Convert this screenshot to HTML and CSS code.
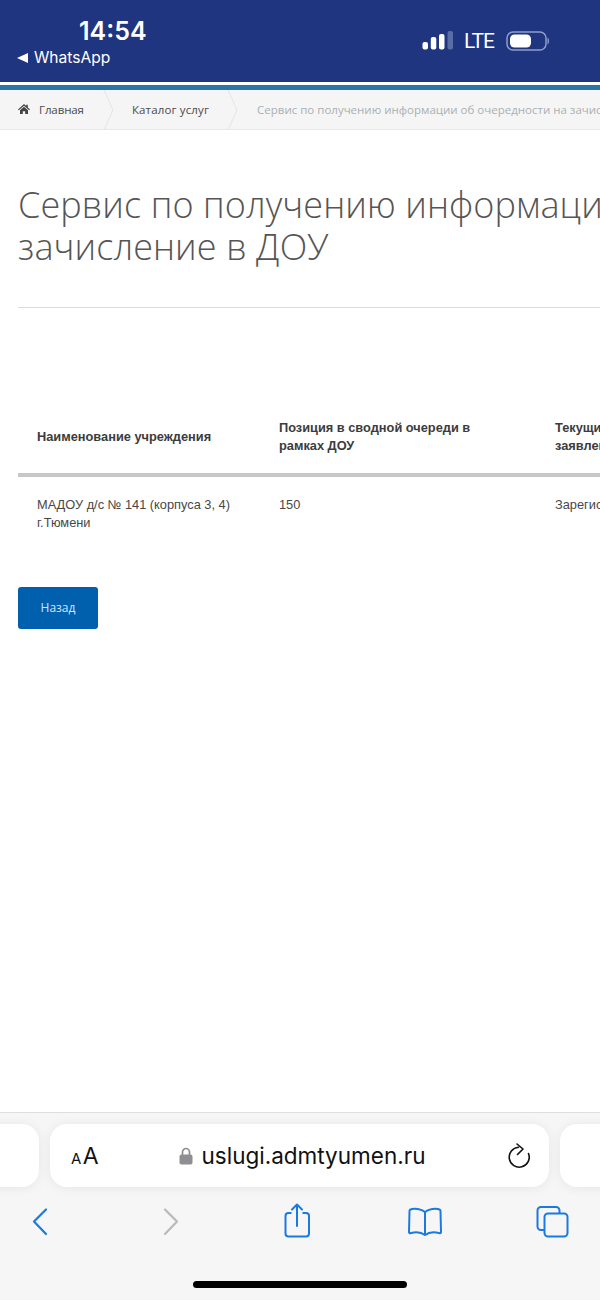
FILE: index.html
```html
<!DOCTYPE html>
<html lang="ru">
<head>
    <meta charset="UTF-8">
    <meta name="viewport" content="width=device-width, initial-scale=1.0">
    <title>Сервис по получению информации об очередности</title>
    <link rel="stylesheet" href="styles.css">
</head>
<body>
    <div class="phone">
        <header class="status-bar">
            <div class="status-left">
                <div class="status-time">14:54</div>
                <div class="status-back">
                    <svg class="back-arrow" width="11" height="10" viewBox="0 0 11 10"><path d="M0 5 L11 0 V10 Z" fill="#fff"/></svg>
                    <span>WhatsApp</span>
                </div>
            </div>
            <div class="status-right">
                <svg class="status-signal" width="31" height="20" viewBox="0 0 31 20">
                    <rect x="0.5" y="11" width="5.5" height="7.500" rx="2" fill="#fff"/>
                    <rect x="8.800" y="6" width="5.500" height="12.500" rx="2" fill="#fff"/>
                    <rect x="17" y="3" width="5.500" height="15.500" rx="2" fill="#fff"/>
                    <rect x="25.500" y="0" width="5.500" height="18.500" rx="2" fill="#5a6ea6"/>
                </svg>
                <span class="status-lte">LTE</span>
                <svg width="44" height="20" viewBox="0 0 44 20">
                    <rect x="1" y="1" width="39" height="18" rx="6" fill="none" stroke="#8f9ec8" stroke-width="1.5"/>
                    <rect x="4" y="3.5" width="21" height="13" rx="4.5" fill="#fff"/>
                    <path d="M41.5 6.5 C43.5 7.5 43.5 12.5 41.5 13.5 Z" fill="#8f9ec8"/>
                </svg>
            </div>
        </header>
        <div class="site-stripe"></div>

        <nav class="breadcrumbs">
            <svg class="crumb-home" width="12" height="10" viewBox="0 0 12 10"><path d="M6 0 L8.2 2 V0.8 H9.8 V3.5 L12 5.5 L11.2 6.3 L6 1.8 L0.8 6.3 L0 5.5 Z M2 6.2 L6 2.8 L10 6.2 V10 H7.2 V7.2 H4.8 V10 H2 Z" fill="#444"/></svg>
            <span class="crumb crumb-first">Главная</span>
            <svg class="crumb-sep" width="14" height="40" viewBox="0 0 14 40"><path d="M1 0 L10 20 L1 40" fill="none" stroke="#e4e4e4" stroke-width="1"/></svg>
            <span class="crumb crumb-second">Каталог услуг</span>
            <svg class="crumb-sep" width="14" height="40" viewBox="0 0 14 40"><path d="M1 0 L10 20 L1 40" fill="none" stroke="#e4e4e4" stroke-width="1"/></svg>
            <span class="crumb crumb-current">Сервис по получению информации об очередности на зачисление в ДОУ</span>
        </nav>

        <main class="content">
            <h1 class="page-title">Сервис по получению информации об очередности на<br>зачисление в ДОУ</h1>
            <div class="title-rule"></div>

            <table class="queue-table">
                <thead>
                    <tr>
                        <th class="col-name">Наименование учреждения</th>
                        <th class="col-pos">Позиция в сводной очереди в рамках ДОУ</th>
                        <th class="col-status">Текущий статус заявления</th>
                    </tr>
                </thead>
                <tbody>
                    <tr>
                        <td>МАДОУ д/с № 141 (корпуса 3, 4) г.Тюмени</td>
                        <td>150</td>
                        <td>Зарегистрировано</td>
                    </tr>
                </tbody>
            </table>

            <a class="btn-back">Назад</a>
        </main>

        <footer class="browser-bar">
            <div class="tabs-row">
                <div class="tab-pill tab-prev"></div>
                <div class="tab-pill tab-main">
                    <span class="text-size"><span class="text-size-small">A</span>A</span>
                    <span class="url">
                        <svg width="14" height="18" viewBox="0 0 14 18"><path d="M3.5 8 V5 A3.5 3.5 0 0 1 10.5 5 V8" fill="none" stroke="#8e8e93" stroke-width="1.7"/><rect x="0.5" y="7.5" width="13" height="10" rx="2" fill="#8e8e93"/></svg>
                        <span>uslugi.admtyumen.ru</span>
                    </span>
                    <svg class="reload" width="24" height="26" viewBox="0 0 24 26"><path d="M22.5 10.5 A10 10 0 1 1 12.5 4.2" fill="none" stroke="#111" stroke-width="1.6" stroke-linecap="round"/><path d="M11 1 L17 6 L11.5 11.5" fill="none" stroke="#111" stroke-width="1.6" stroke-linecap="round" stroke-linejoin="round"/></svg>
                </div>
                <div class="tab-pill tab-next"></div>
            </div>
            <div class="tools-row">
                <svg width="36" height="36" viewBox="0 0 36 36"><path d="M30 6.500 L18 18.500 L30 31" fill="none" stroke="#1a7ae0" stroke-width="2.200" stroke-linecap="round" stroke-linejoin="round"/></svg>
                <svg width="36" height="36" viewBox="0 0 36 36"><path d="M19 6.500 L31 18.500 L19 31" fill="none" stroke="#b9b9bb" stroke-width="2.200" stroke-linecap="round" stroke-linejoin="round"/></svg>
                <svg width="36" height="36" viewBox="0 0 36 36"><path d="M15.500 10 H12.500 A3 3 0 0 0 9.500 13 V30.500 A3 3 0 0 0 12.500 33.500 H30 A3 3 0 0 0 33 30.500 V13 A3 3 0 0 0 30 10 H26.500" fill="none" stroke="#1a7ae0" stroke-width="2"/><path d="M21 23 V1.500 M16 6.500 L21 1.500 L26 6.500" fill="none" stroke="#1a7ae0" stroke-width="2" stroke-linecap="round" stroke-linejoin="round"/></svg>
                <svg width="36" height="36" viewBox="0 0 36 36"><path d="M19 9 C15.500 6 8 5 4.500 6.500 Q3.500 7 3.500 8 L3 29 C3 30 3.800 30.500 5 30 C9 29 15 29 19 32 C23 29 29 29 33 30 C34.200 30.500 35 30 35 29 L34.500 8 Q34.500 7 33.500 6.500 C30 5 22.500 6 19 9 Z M19 9 V32" fill="none" stroke="#1a7ae0" stroke-width="2" stroke-linejoin="round"/></svg>
                <svg width="36" height="36" viewBox="0 0 36 36"><path d="M8 27 H5 A3.500 3.500 0 0 1 1.500 23.500 V7.500 A3.500 3.500 0 0 1 5 4 H20 A3.500 3.500 0 0 1 23.500 7.500 V10" fill="none" stroke="#1a7ae0" stroke-width="2"/><rect x="8.500" y="10.500" width="23" height="23" rx="3.500" fill="none" stroke="#1a7ae0" stroke-width="2"/></svg>
            </div>
            <div class="home-indicator"></div>
        </footer>
    </div>
</body>
</html>
```

FILE: styles.css
```css
* {
    box-sizing: border-box;
    margin: 0;
    padding: 0;
}

body {
    background-color: #fff;
    font-family: 'Liberation Sans', Arial, sans-serif;
}

.phone {
    width: 600px;
    height: 1300px;
    display: flex;
    flex-direction: column;
    overflow: hidden;
}

.status-bar {
    height: 82px;
    background-color: #1f3580;
    color: #fff;
    display: flex;
    justify-content: space-between;
    font-family: 'Inter', sans-serif;
}

.status-left {
    padding: 16px 0 0 17px;
}

.status-time {
    font-size: 25px;
    font-weight: 600;
    line-height: 30px;
    padding-left: 62px;
}

.status-back {
    display: flex;
    align-items: center;
    gap: 6px;
    font-size: 15.6px;
    line-height: 22px;
    margin-top: 1px;
}

.status-right {
    display: flex;
    align-items: center;
    gap: 12px;
    padding: 0 50px 0 0;
    height: 82px;
}

.status-signal {
    margin-right: -1px;
}

.status-lte {
    font-family: 'Roboto', sans-serif;
    font-size: 21px;
    letter-spacing: -1px;
}

.site-stripe {
    height: 8px;
    background-color: #2a76a6;
    border-top: 3px solid #fff;
}

.breadcrumbs {
    height: 40px;
    flex: none;
    background-color: #f5f5f5;
    border-bottom: 1px solid #e8e8e8;
    display: flex;
    align-items: center;
    padding-left: 18px;
    white-space: nowrap;
    overflow: hidden;
    font-family: 'Open Sans', sans-serif;
    font-size: 11.5px;
    color: #4a4a4a;
}

.crumb-home {
    flex: none;
    margin-top: -2px;
}

.crumb-sep {
    flex: none;
}

.crumb-first {
    margin-left: 9px;
    margin-right: 19px;
    letter-spacing: -0.1px;
}

.crumb-second {
    margin-left: 15px;
    margin-right: 18px;
    letter-spacing: 0.15px;
}

.crumb-current {
    margin-left: 16px;
    color: #a9b0b3;
}

.content {
    flex: 1;
    padding: 54px 0 0 18px;
    overflow: hidden;
}

.page-title {
    font-family: 'Open Sans', sans-serif;
    font-weight: 300;
    font-size: 36px;
    line-height: 42px;
    letter-spacing: 0.1px;
    color: #555;
    white-space: nowrap;
}

.title-rule {
    height: 1px;
    background-color: #dcdcdc;
    margin-top: 39px;
}

.queue-table {
    margin-top: 98px;
    width: 700px;
    table-layout: fixed;
    border-collapse: collapse;
    font-size: 12.8px;
    line-height: 18px;
    color: #3c3c3c;
}

.queue-table th {
    text-align: left;
    font-weight: bold;
    padding: 11px 19px 16px;
    height: 69px;
    vertical-align: middle;
    border-bottom: 4px solid #c8c8c8;
}

.queue-table td {
    padding: 19px 19px 17px;
    vertical-align: top;
    color: #474747;
}

.col-name {
    width: 242px;
}

.col-pos {
    width: 276px;
}

.btn-back {
    display: block;
    width: 80px;
    height: 42px;
    margin-top: 38px;
    background-color: #0060ae;
    border-radius: 3px;
    color: #cfe6ff;
    font-family: 'Open Sans', sans-serif;
    font-size: 12px;
    line-height: 42px;
    text-align: center;
}

.browser-bar {
    height: 188px;
    flex: none;
    background-color: #f6f6f6;
    border-top: 1px solid #dedede;
}

.tabs-row {
    display: flex;
    gap: 11px;
    margin-top: 11px;
    height: 63px;
}

.tab-pill {
    flex: none;
    height: 63px;
    background-color: #fff;
    border-radius: 17px;
    box-shadow: 0 1px 12px rgba(0, 0, 0, 0.07);
}

.tab-prev {
    width: 100px;
    margin-left: -61px;
}

.tab-main {
    width: 499px;
    display: flex;
    align-items: center;
    justify-content: space-between;
    padding: 0 19px 0 21px;
}

.tab-next {
    width: 100px;
}

.text-size {
    font-family: 'Inter', sans-serif;
    font-size: 23px;
    color: #111;
    width: 27px;
    white-space: nowrap;
}

.text-size-small {
    font-size: 15px;
    letter-spacing: 1.5px;
}

.url {
    display: flex;
    align-items: center;
    gap: 9px;
    font-family: 'Inter', sans-serif;
    font-size: 22.5px;
    color: #111;
}

.tools-row {
    display: flex;
    justify-content: space-between;
    align-items: center;
    height: 36px;
    padding: 0 28px 0 16px;
    margin-top: 16px;
}

.home-indicator {
    width: 214px;
    height: 7px;
    background-color: #000;
    border-radius: 4px;
    margin: 42px auto 0;
}
```
